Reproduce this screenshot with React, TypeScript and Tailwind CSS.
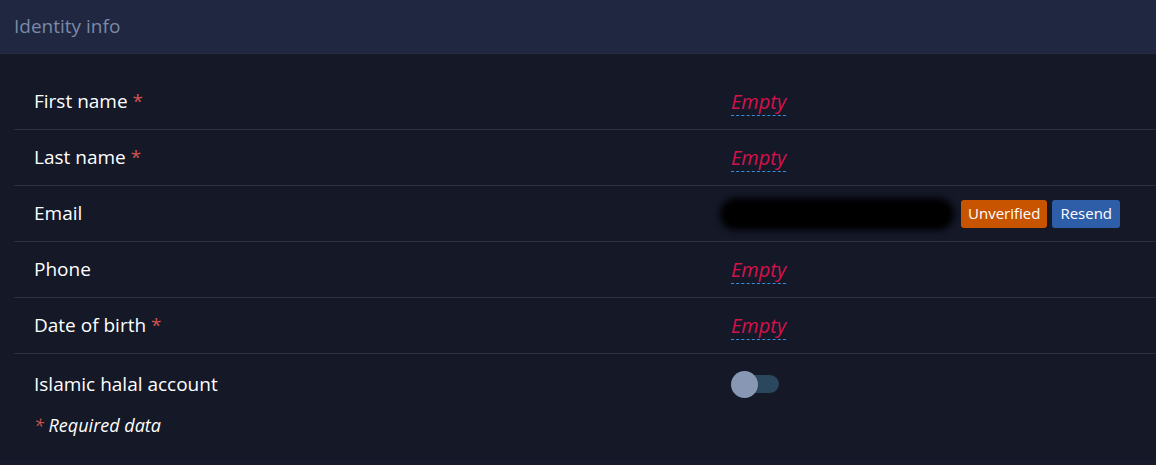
const rows: { label: string; required?: boolean; kind: "empty" | "email" }[] = [
  { label: "First name", required: true, kind: "empty" },
  { label: "Last name", required: true, kind: "empty" },
  { label: "Email", kind: "email" },
  { label: "Phone", kind: "empty" },
  { label: "Date of birth", required: true, kind: "empty" },
];

function EmptyValue() {
  return (
    <div className="mt-[1px] flex flex-col">
      <span className="italic text-[20px] leading-[26px] text-[#d4124f]">Empty</span>
      <div className="h-0 border-t border-dashed border-[#2f8fd4]" />
    </div>
  );
}

export default function App() {
  return (
    <div
      className="w-[1156px] h-[465px] bg-[#141827] text-white overflow-hidden flex flex-col"
      style={{ fontFamily: '"Open Sans", "Noto Sans", sans-serif' }}
    >
      {/* header */}
      <div className="h-[54px] shrink-0 bg-[#1f2741] border-b border-[#262d45] flex items-center px-[14px]">
        <h2 className="text-[19px] text-[#7b8aa6]">Identity info</h2>
      </div>

      <div className="flex-1 pl-[14px] pt-[20px]">
        {rows.map((row) => (
          <div
            key={row.label}
            className="h-[56px] flex items-center border-b border-[#2a2f42] pl-[20px]"
          >
            <div className="w-[697px] text-[19px]">
              {row.label}
              {row.required && <span className="text-[#d0534f] ml-[5px]">*</span>}
            </div>
            {row.kind === "empty" && <EmptyValue />}
            {row.kind === "email" && (
              <div className="flex items-center -ml-[11px]">
                <div className="w-[234px] h-[32px] rounded-full bg-black blur-[3px]" />
                <span className="ml-[7px] h-[28px] px-[7px] flex items-center rounded-[3px] bg-[#c95400] text-[15px]">
                  Unverified
                </span>
                <span className="ml-[5px] h-[28px] px-[8px] flex items-center rounded-[3px] bg-[#2f5ea9] text-[15px]">
                  Resend
                </span>
              </div>
            )}
          </div>
        ))}

        <div className="h-[60px] flex items-center pl-[20px]">
          <div className="w-[697px] text-[19px]">Islamic halal account</div>
          <div className="relative w-[48px] h-[27px] flex items-center">
            <div className="absolute left-[13px] w-[35px] h-[18px] rounded-full bg-[#2a475d]" />
            <div className="absolute left-0 w-[27px] h-[27px] rounded-full bg-[#8898b4]" />
          </div>
        </div>

        <div className="-mt-[2px] pl-[20px] text-[18px] italic">
          <span className="text-[#d0534f]">*</span> Required data
        </div>
      </div>

      {/* next section edge */}
      <div className="h-[5px] shrink-0 bg-[#171b2b]" />
    </div>
  );
}
